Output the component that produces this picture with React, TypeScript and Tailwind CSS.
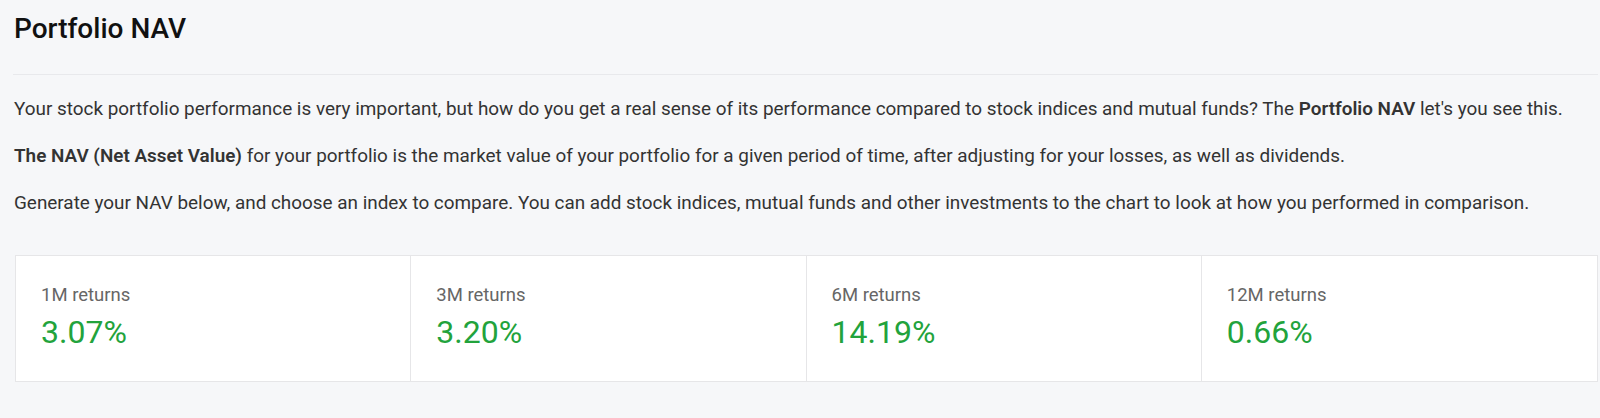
const returns = [
  { label: "1M returns", value: "3.07%" },
  { label: "3M returns", value: "3.20%" },
  { label: "6M returns", value: "14.19%" },
  { label: "12M returns", value: "0.66%" },
];

const App = () => {
  return (
    <div className="min-h-[418px] bg-[#f6f7f9] pl-[13px] pr-[2px] font-['Roboto',sans-serif]">
      <h1 className="pt-[12px] pl-[1px] text-[28px] leading-[34px] font-medium text-[#111]">Portfolio NAV</h1>
      <div className="mt-[28px] border-t border-[#e8e9ec]" />

      <div className="pt-[20px] pl-[1px] text-[18.9px] leading-[27px] text-[#333]">
        <p className="mb-[20px]">
          Your stock portfolio performance is very important, but how do you get a real sense of its performance
          compared to stock indices and mutual funds? The <b className="font-semibold">Portfolio NAV</b> let's you see this.
        </p>
        <p className="mb-[20px]">
          <b className="font-semibold">The NAV (Net Asset Value)</b> for your portfolio is the market value of your portfolio
          for a given period of time, after adjusting for your losses, as well as dividends.
        </p>
        <p>
          Generate your NAV below, and choose an index to compare. You can add stock indices, mutual funds and other
          investments to the chart to look at how you performed in comparison.
        </p>
      </div>

      <div className="mt-[39px] ml-[2px] grid grid-cols-4 border border-[#e6e6e8] bg-white">
        {returns.map((r, i) => (
          <div
            key={r.label}
            className={`pl-[25px] pt-[27px] pb-[29px] ${i < 3 ? "border-r border-[#e6e6e8]" : ""}`}
          >
            <div className="text-[18.5px] leading-[24px] text-[#666]">{r.label}</div>
            <div className="mt-[5px] text-[32px] leading-[40px] text-[#22a33c]">{r.value}</div>
          </div>
        ))}
      </div>
    </div>
  );
};

export default App;
